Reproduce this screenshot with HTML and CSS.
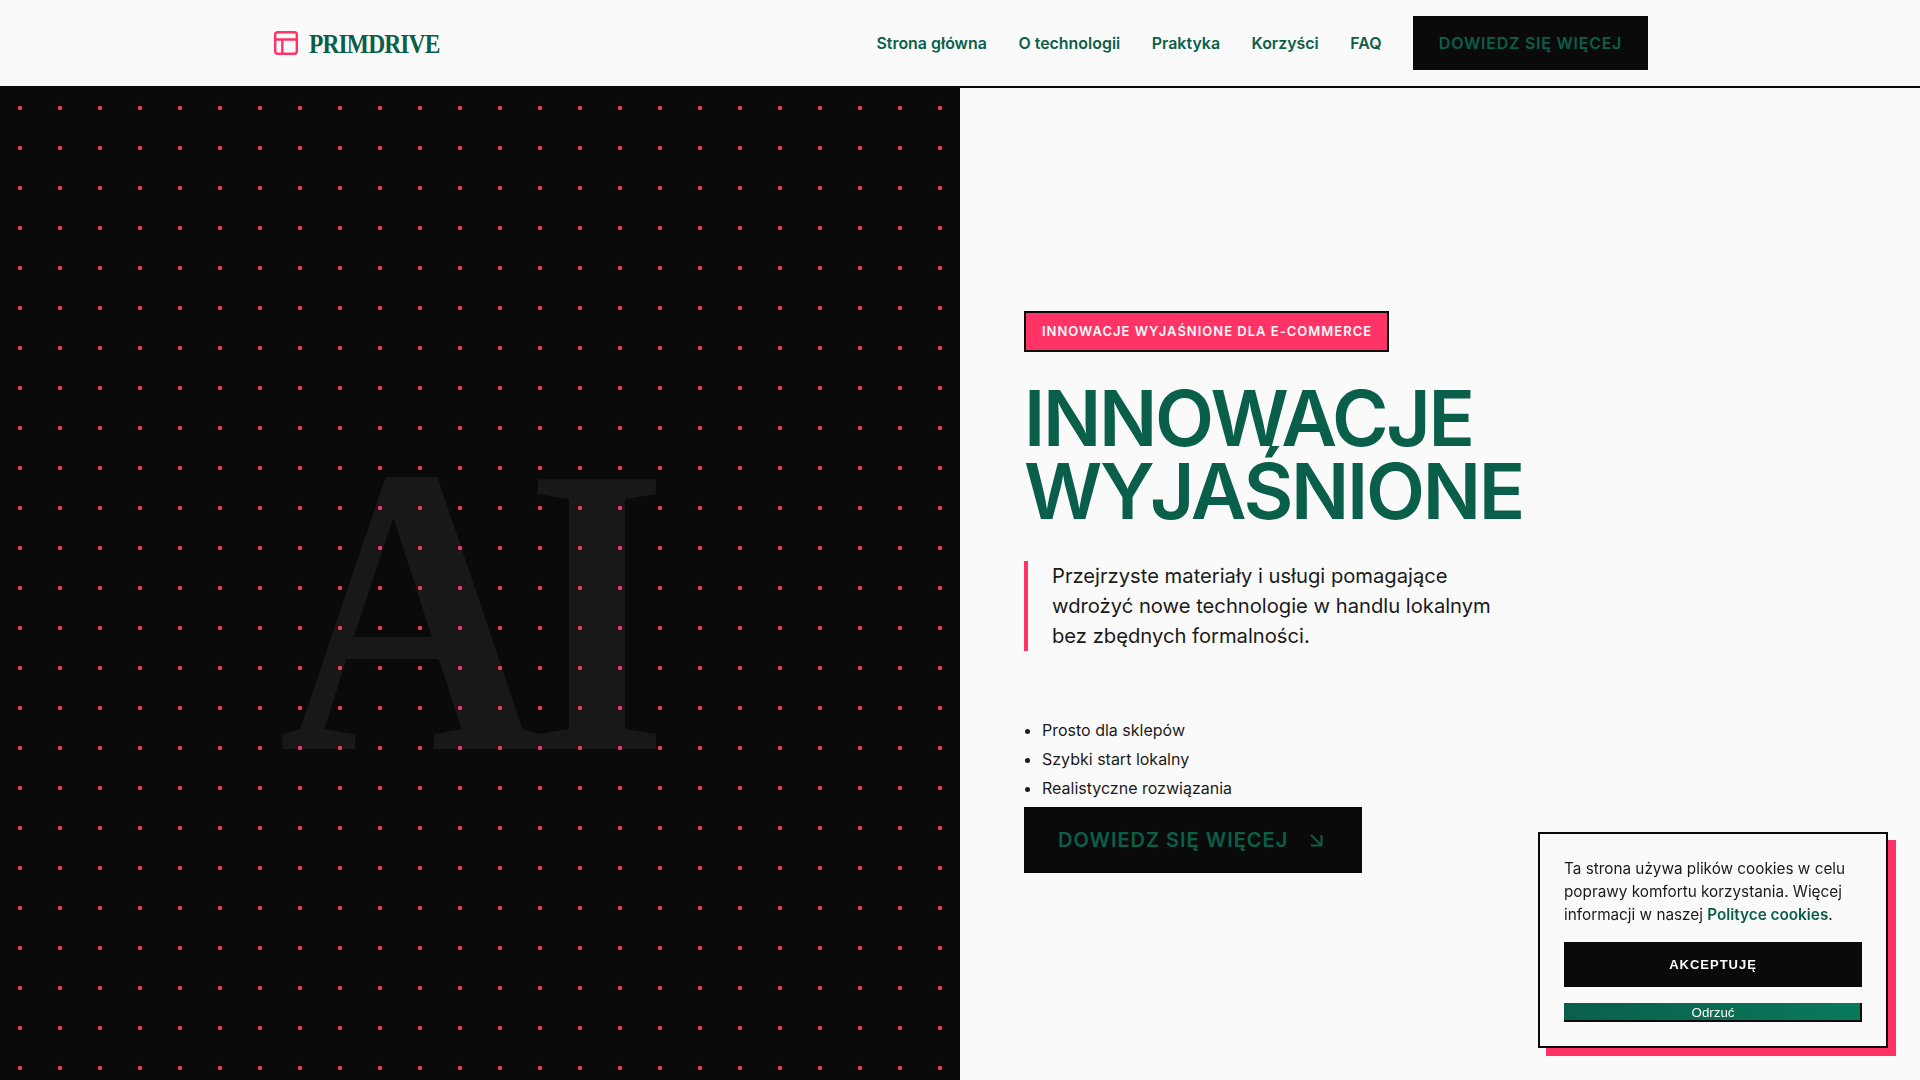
FILE: index.html
```html
<!DOCTYPE html>
<html lang="pl">
<head>
<meta charset="utf-8">
<title>PRIMDRIVE</title>
<link rel="stylesheet" href="styles.css">
</head>
<body>
<header class="site-header">
  <div class="header-inner">
    <a class="logo" href="#">
      <svg class="logo-icon" viewBox="0 0 24 24" fill="none" stroke="currentColor" stroke-width="2.4" stroke-linecap="round" stroke-linejoin="round"><rect x="1.2" y="1.200" width="21.600" height="21.600" rx="2.500"/><path d="M1.200 8.500h21.600M8.300 8.500v14.300"/></svg>
      <span class="logo-text">PRIMDRIVE</span>
    </a>
    <nav class="nav">
      <a href="#">Strona główna</a>
      <a href="#">O technologii</a>
      <a href="#">Praktyka</a>
      <a href="#">Korzyści</a>
      <a href="#">FAQ</a>
      <a class="nav-cta" href="#">DOWIEDZ SIĘ WIĘCEJ</a>
    </nav>
  </div>
</header>
<main class="hero">
  <section class="hero-art">
    <div class="hero-letters">AI</div>
    <div class="hero-dots"></div>
  </section>
  <section class="hero-copy">
    <span class="tag">INNOWACJE WYJAŚNIONE DLA E-COMMERCE</span>
    <h1>INNOWACJE WYJAŚNIONE</h1>
    <p class="lead">Przejrzyste materiały i usługi pomagające wdrożyć nowe technologie w handlu lokalnym bez zbędnych formalności.</p>
    <ul class="points">
      <li>Prosto dla sklepów</li>
      <li>Szybki start lokalny</li>
      <li>Realistyczne rozwiązania</li>
    </ul>
    <a class="cta" href="#">DOWIEDZ SIĘ WIĘCEJ
      <svg class="cta-icon" viewBox="0 0 13 13" fill="none" stroke="currentColor" stroke-width="2"><path d="M1 1l10.500 10.500M11.500 1v10.500H1"/></svg>
    </a>
  </section>
</main>
<aside class="cookie">
  <p>Ta strona używa plików cookies w celu poprawy komfortu korzystania. Więcej informacji w naszej <a href="#">Polityce cookies</a>.</p>
  <button class="accept">AKCEPTUJĘ</button>
  <button class="reject">Odrzuć</button>
</aside>
</body>
</html>
```
FILE: styles.css
```css
* { box-sizing: border-box; }
html, body { margin: 0; padding: 0; }
body {
  height: 1080px;
  overflow: hidden;
  background: #fafafa;
  color: #1a1a1a;
  font-family: Inter, "Noto Sans", sans-serif;
}
a { text-decoration: none; color: inherit; }

.site-header {
  height: 88px;
  border-bottom: 2px solid #0a0a0a;
  background: #fafafa;
}
.header-inner {
  width: 1400px;
  height: 86px;
  margin: 0 auto;
  padding: 0 12px 0 14px;
  display: flex;
  align-items: center;
  justify-content: space-between;
}
.logo {
  display: flex;
  align-items: center;
  gap: 11px;
  color: #0a5f4a;
  font-family: "Liberation Serif", serif;
  font-weight: 700;
  font-size: 27px;
}
.logo-text {
  display: inline-block;
  margin-top: 2px;
  letter-spacing: -1px;
  transform: scaleX(.87);
  transform-origin: left center;
}
.logo-icon { width: 24px; height: 24px; color: #ff3366; }
.nav {
  display: flex;
  align-items: center;
  gap: 31.5px;
  color: #0a5f4a;
  font-size: 15.95px;
  font-weight: 600;
}
.nav-cta {
  width: 235px;
  height: 54px;
  display: flex;
  align-items: center;
  justify-content: center;
  background: #0a0a0a;
  font-size: 16px;
  letter-spacing: .75px;
}

.hero {
  display: grid;
  grid-template-columns: 960px 960px;
  height: 992px;
}
.hero-art {
  position: relative;
  overflow: hidden;
  background: #0a0a0a;
  margin-top: -2px;
}
.hero-letters {
  position: absolute;
  left: 0;
  right: 0;
  top: 318px;
  text-align: center;
  color: #181818;
  font-family: "Liberation Serif", serif;
  font-weight: 700;
  font-size: 412px;
  line-height: 1;
  letter-spacing: -20px;
  transform: translateX(-15.4px) scaleX(.89);
}
.hero-dots {
  position: absolute;
  inset: 2px 0 0 0;
  background-image: radial-gradient(circle, #ff3366 1.9px, transparent 2.4px);
  background-size: 40px 40px;
}
.hero-copy {
  display: flex;
  flex-direction: column;
  align-items: flex-start;
  padding: 223px 64px 0;
}
.tag {
  height: 41px;
  padding: 0 15px 1px 16px;
  display: flex;
  align-items: center;
  background: #ff3366;
  border: 2px solid #0a0a0a;
  color: #fafafa;
  font-size: 13px;
  font-weight: 600;
  letter-spacing: 1px;
}
h1 {
  width: 520px;
  margin: 29.500px 0 33.500px;
  color: #0a5f4a;
  font-size: 76.8px;
  font-weight: 600;
  line-height: 73px;
  letter-spacing: -2.3px;
}
.lead {
  width: 490px;
  margin: 0 0 65px;
  padding-left: 24px;
  border-left: 4px solid #ff3366;
  font-size: 20.2px;
  line-height: 30px;
}
.points {
  margin: 0;
  padding-left: 18px;
  font-size: 16px;
  line-height: 29px;
}
.cta {
  margin-top: 4px;
  width: 338px;
  height: 66px;
  padding: 0 34px;
  display: flex;
  align-items: center;
  gap: 22px;
  background: #0a0a0a;
  color: #0a5f4a;
  font-size: 20px;
  font-weight: 600;
  letter-spacing: 1px;
}
.cta-icon { width: 13px; height: 13px; flex: none; }

.cookie {
  position: fixed;
  right: 32px;
  bottom: 32px;
  width: 350px;
  height: 216px;
  padding: 24px;
  display: flex;
  flex-direction: column;
  background: #fafafa;
  border: 2px solid #0a0a0a;
  box-shadow: 8px 8px 0 #ff3366;
}
.cookie p {
  margin: 0 0 15.6px;
  font-size: 15.3px;
  line-height: 22.8px;
}
.cookie a { color: #0a5f4a; font-weight: 600; }
.cookie button { font-family: "Liberation Sans", sans-serif; cursor: pointer; }
.accept {
  height: 45px;
  margin-bottom: 16px;
  border: 0;
  background: #0a0a0a;
  color: #fafafa;
  font-size: 13px;
  font-weight: 700;
  letter-spacing: 1px;
}
.reject {
  height: 19px;
  padding: 2px 0 0 2px;
  border: 0;
  border-right: 2px solid #0a0a0a;
  border-bottom: 2px solid #0a0a0a;
  background: linear-gradient(90deg, #0a5f4a, #0a7a5a);
  color: #fafafa;
  font-size: 13.333px;
}
```
